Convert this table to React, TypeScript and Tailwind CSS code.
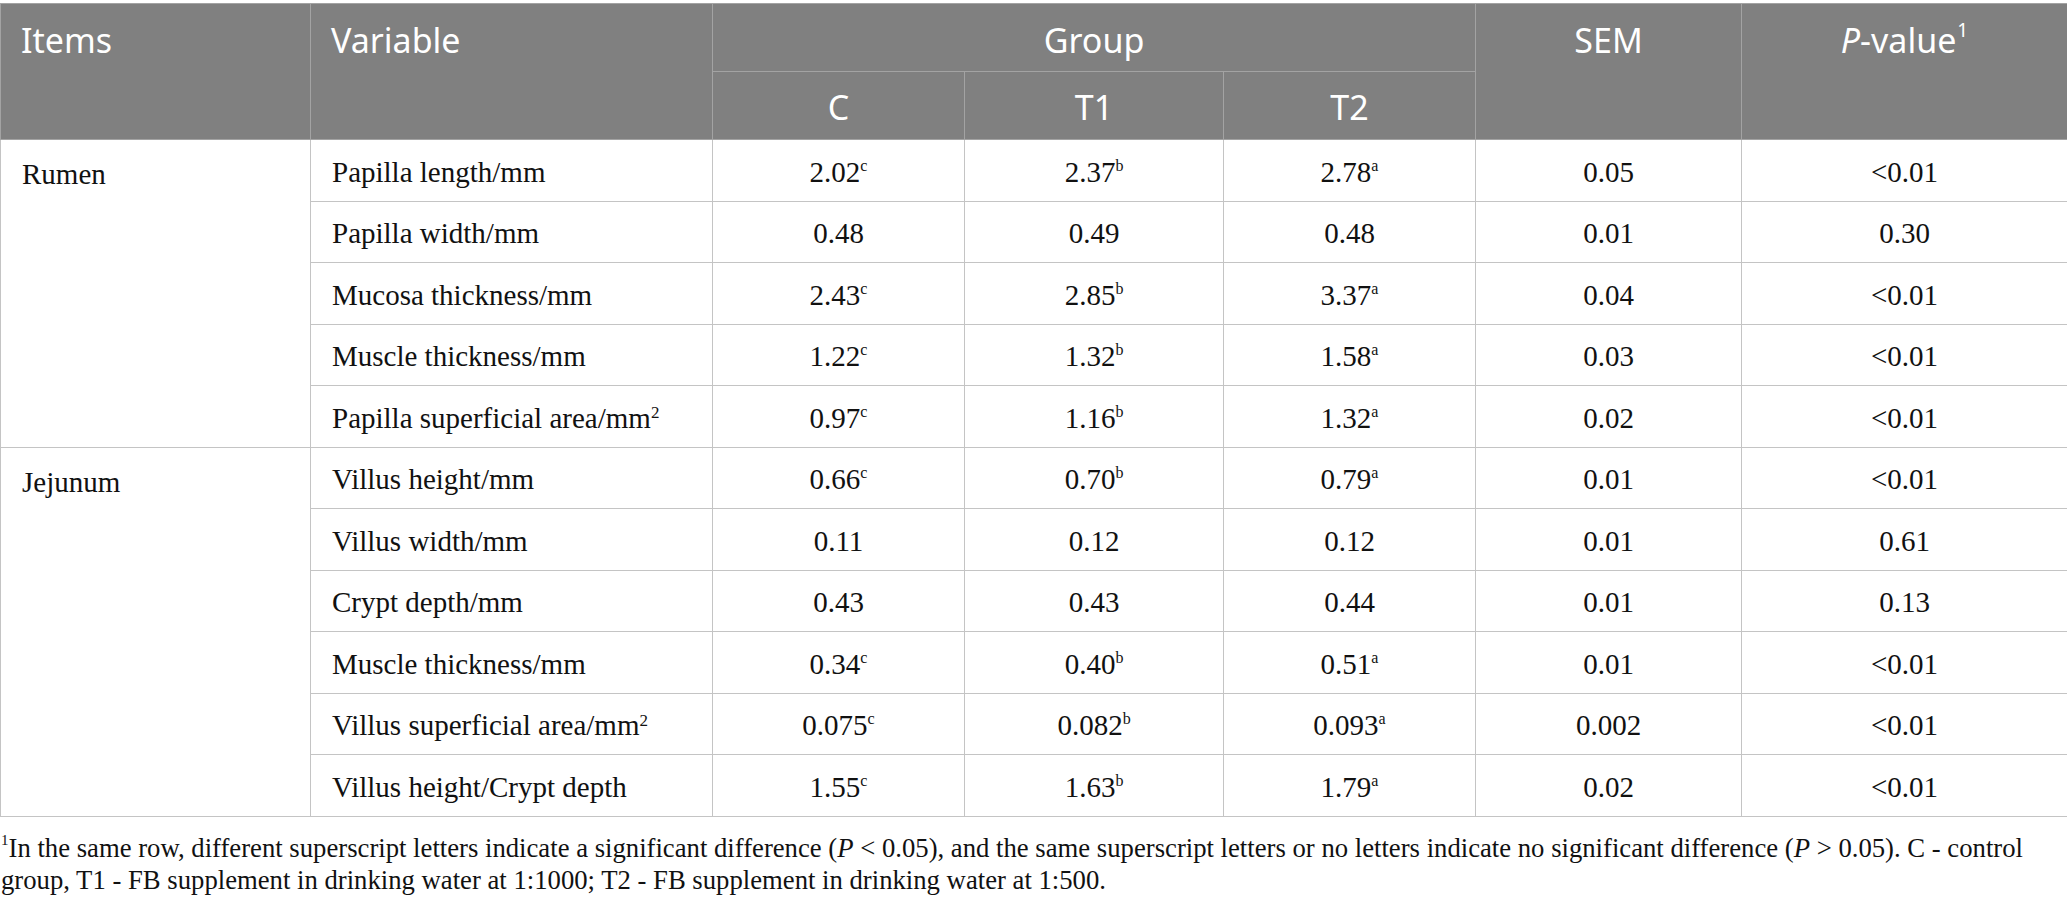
type Cell = { v: string; s?: string };

interface Row {
  variable: React.ReactNode;
  c: Cell;
  t1: Cell;
  t2: Cell;
  sem: string;
  p: string;
}

const supCls = "text-[16px] leading-none top-[-0.68em]";

const RUMEN: Row[] = [
  { variable: "Papilla length/mm", c: { v: "2.02", s: "c" }, t1: { v: "2.37", s: "b" }, t2: { v: "2.78", s: "a" }, sem: "0.05", p: "<0.01" },
  { variable: "Papilla width/mm", c: { v: "0.48" }, t1: { v: "0.49" }, t2: { v: "0.48" }, sem: "0.01", p: "0.30" },
  { variable: "Mucosa thickness/mm", c: { v: "2.43", s: "c" }, t1: { v: "2.85", s: "b" }, t2: { v: "3.37", s: "a" }, sem: "0.04", p: "<0.01" },
  { variable: "Muscle thickness/mm", c: { v: "1.22", s: "c" }, t1: { v: "1.32", s: "b" }, t2: { v: "1.58", s: "a" }, sem: "0.03", p: "<0.01" },
  {
    variable: (
      <>
        Papilla superficial area/mm<sup className="text-[17px] leading-none top-[-0.55em]">2</sup>
      </>
    ),
    c: { v: "0.97", s: "c" },
    t1: { v: "1.16", s: "b" },
    t2: { v: "1.32", s: "a" },
    sem: "0.02",
    p: "<0.01",
  },
];

const JEJUNUM: Row[] = [
  { variable: "Villus height/mm", c: { v: "0.66", s: "c" }, t1: { v: "0.70", s: "b" }, t2: { v: "0.79", s: "a" }, sem: "0.01", p: "<0.01" },
  { variable: "Villus width/mm", c: { v: "0.11" }, t1: { v: "0.12" }, t2: { v: "0.12" }, sem: "0.01", p: "0.61" },
  { variable: "Crypt depth/mm", c: { v: "0.43" }, t1: { v: "0.43" }, t2: { v: "0.44" }, sem: "0.01", p: "0.13" },
  { variable: "Muscle thickness/mm", c: { v: "0.34", s: "c" }, t1: { v: "0.40", s: "b" }, t2: { v: "0.51", s: "a" }, sem: "0.01", p: "<0.01" },
  {
    variable: (
      <>
        Villus superficial area/mm<sup className="text-[17px] leading-none top-[-0.55em]">2</sup>
      </>
    ),
    c: { v: "0.075", s: "c" },
    t1: { v: "0.082", s: "b" },
    t2: { v: "0.093", s: "a" },
    sem: "0.002",
    p: "<0.01",
  },
  { variable: "Villus height/Crypt depth", c: { v: "1.55", s: "c" }, t1: { v: "1.63", s: "b" }, t2: { v: "1.79", s: "a" }, sem: "0.02", p: "<0.01" },
];

const td = "border border-[#c4c4c4] h-[61.5px] align-middle p-0 pt-[4px]";

function Val({ cell }: { cell: Cell }) {
  return (
    <td className={`${td} text-center`}>
      {cell.v}
      {cell.s && <sup className={supCls}>{cell.s}</sup>}
    </td>
  );
}

function Section({ name, rows }: { name: string; rows: Row[] }) {
  return (
    <>
      {rows.map((r, i) => (
        <tr key={i}>
          {i === 0 && (
            <td rowSpan={rows.length} className="border border-[#c4c4c4] align-top pl-[21px] pt-[14px] leading-[40px]">
              {name}
            </td>
          )}
          <td className={`${td} pl-[21px] text-left`}>{r.variable}</td>
          <Val cell={r.c} />
          <Val cell={r.t1} />
          <Val cell={r.t2} />
          <td className={`${td} text-center`}>{r.sem}</td>
          <td className={`${td} text-center`}>{r.p}</td>
        </tr>
      ))}
    </>
  );
}

export default function App() {
  const head = "border border-[#a3a3a3] font-normal text-white";
  return (
    <div className="bg-white w-[2067px] pt-[3px]">
      <table
        className="w-full table-fixed border-collapse text-[29px] text-[#111111]"
        style={{ fontFamily: '"Liberation Serif", "Times New Roman", serif' }}
      >
        <colgroup>
          <col className="w-[310px]" />
          <col className="w-[402px]" />
          <col className="w-[252px]" />
          <col className="w-[259px]" />
          <col className="w-[252px]" />
          <col className="w-[266px]" />
          <col className="w-[326px]" />
        </colgroup>
        <thead className="bg-[#808080] text-[34px]" style={{ fontFamily: '"Noto Sans", "Open Sans", sans-serif' }}>
          <tr className="h-[68px]">
            <th rowSpan={2} className={`${head} align-top text-left pl-[20px] pt-[13px] leading-[46px]`}>
              Items
            </th>
            <th rowSpan={2} className={`${head} align-top text-left pl-[20px] pt-[13px] leading-[46px]`}>
              Variable
            </th>
            <th colSpan={3} className={`${head} text-center align-middle pt-[5px]`}>
              Group
            </th>
            <th rowSpan={2} className={`${head} align-top text-center pt-[13px] leading-[46px]`}>
              SEM
            </th>
            <th rowSpan={2} className={`${head} align-top text-center pt-[13px] leading-[46px]`}>
              <i>P</i>-value<sup className="text-[19px] leading-none top-[-0.85em] ml-[1px]">1</sup>
            </th>
          </tr>
          <tr className="h-[68px]">
            <th className={`${head} text-center align-middle pt-[3px]`}>C</th>
            <th className={`${head} text-center align-middle pt-[3px]`}>T1</th>
            <th className={`${head} text-center align-middle pt-[3px]`}>T2</th>
          </tr>
        </thead>
        <tbody>
          <Section name="Rumen" rows={RUMEN} />
          <Section name="Jejunum" rows={JEJUNUM} />
        </tbody>
      </table>

      {/* Footnote */}
      <p
        className="mt-[15px] pl-[1px] text-[26.7px] leading-[32px] text-[#111111]"
        style={{ fontFamily: '"Liberation Serif", "Times New Roman", serif' }}
      >
        <span className="whitespace-nowrap">
          <sup className="text-[15px] leading-none top-[-0.75em]">1</sup>In the same row, different superscript letters
          indicate a significant difference (<i>P</i> &lt; 0.05), and the same superscript letters or no letters indicate
          no significant difference (<i>P</i> &gt; 0.05). C - control
        </span>
        <br />
        group, T1 - FB supplement in drinking water at 1:1000; T2 - FB supplement in drinking water at 1:500.
      </p>
    </div>
  );
}
